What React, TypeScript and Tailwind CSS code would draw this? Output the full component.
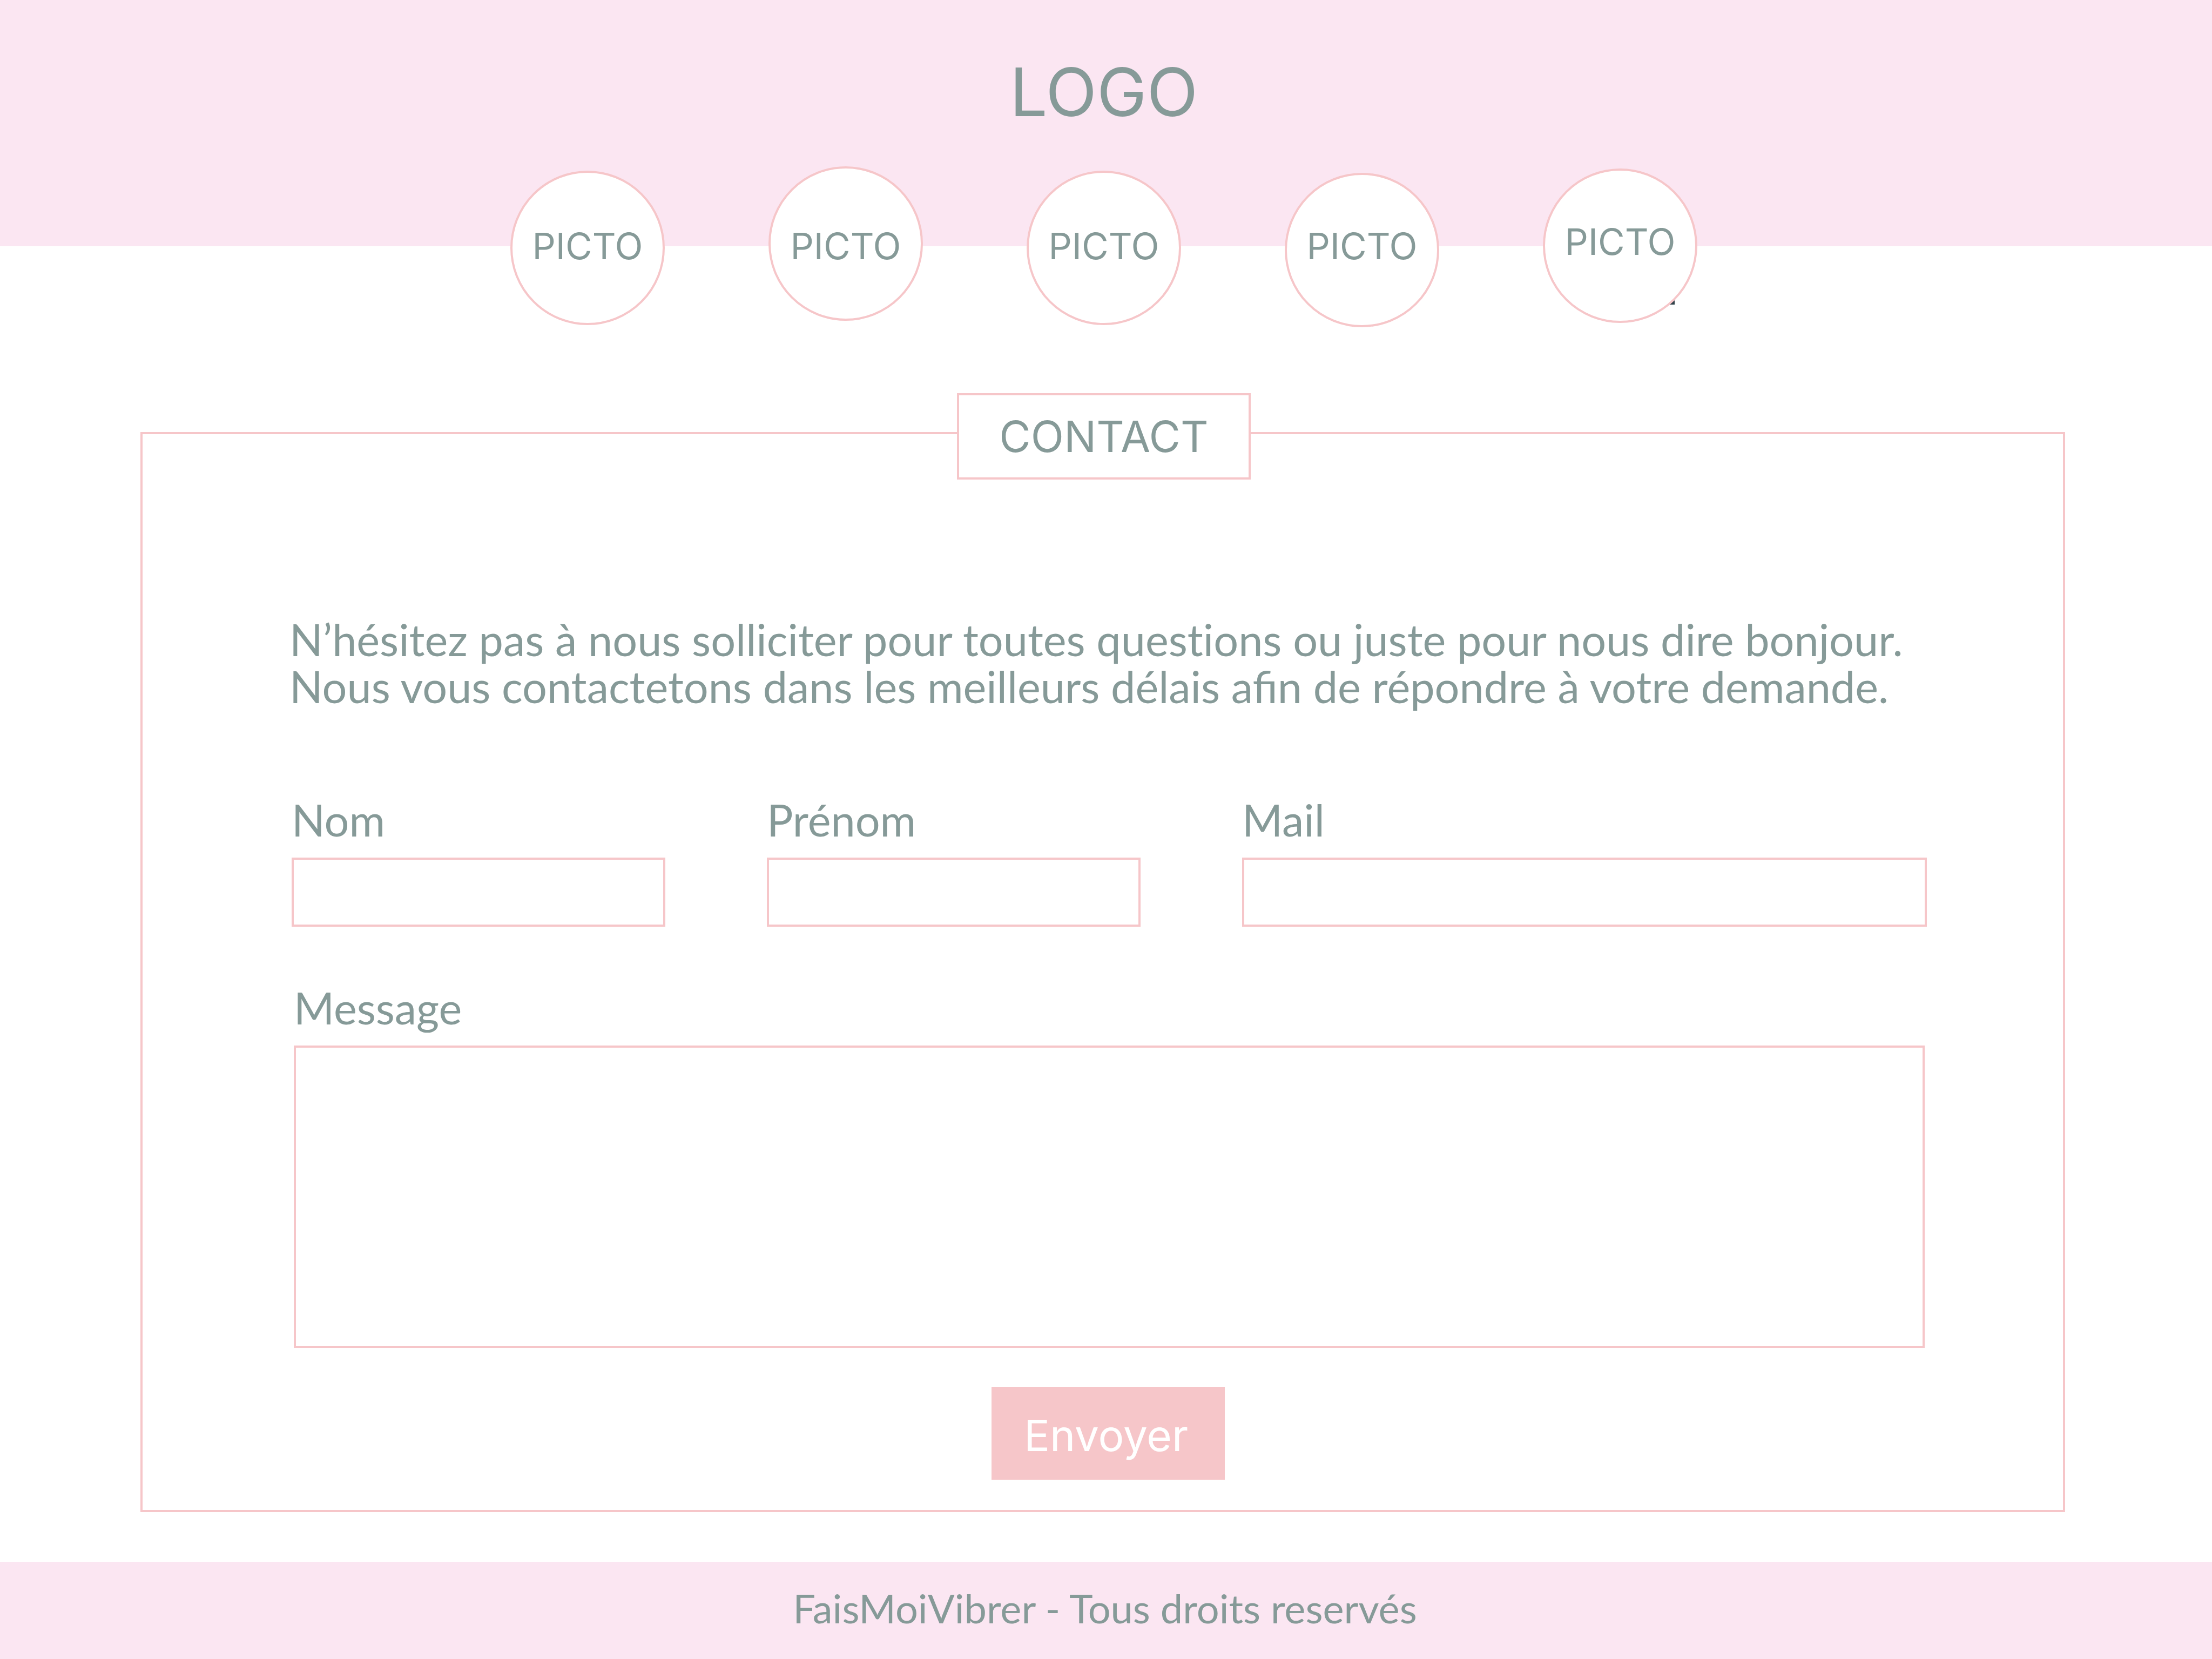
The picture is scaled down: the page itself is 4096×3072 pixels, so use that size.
type Picto = { id: number; drop: string; inner: string; mark?: boolean };

const pictos: Picto[] = [
  { id: 1, drop: "mt-2", inner: "pb-2" },
  { id: 2, drop: "mt-0", inner: "pt-2" },
  { id: 3, drop: "mt-2", inner: "pb-2" },
  { id: 4, drop: "mt-3", inner: "pb-4" },
  { id: 5, drop: "mt-1", inner: "pb-4", mark: true },
];

const fields = [
  { id: "nom", label: "Nom", type: "text" },
  { id: "prenom", label: "Prénom", type: "text" },
  { id: "mail", label: "Mail", type: "email" },
];

const labelClass = "text-[81px] leading-[96px]";
const boxClass = "w-full border-4 border-[#f6c6c9] bg-white px-8 text-[64px] outline-none";

function Header() {
  return (
    <header className="flex flex-col items-center bg-[#fbe6f2] pt-[106px] pr-2 font-[Inter,sans-serif]">
      <a href="#accueil" className="text-[124px] leading-[128px]">
        LOGO
      </a>
      <nav aria-label="Navigation principale" className="relative mt-[74px] -mb-[150px] flex items-start gap-48">
        {pictos.map((p) => (
          <div key={p.id} className={`relative ${p.drop}`}>
            {p.mark && <span className="absolute right-[42px] bottom-[34px] size-3 bg-[#31424a]" />}
            <a
              href={`#picto-${p.id}`}
              className={`relative flex size-[286px] items-center justify-center rounded-full border-4 border-[#f6c6c9] bg-white text-[68px] leading-[80px] ${p.inner}`}
            >
              PICTO
            </a>
          </div>
        ))}
      </nav>
    </header>
  );
}

function ContactForm() {
  return (
    <form className="mt-[156px] flex flex-col pl-1" onSubmit={(e) => e.preventDefault()}>
      <div className="grid grid-cols-[692fr_692fr_1268fr] gap-[188px]">
        {fields.map((f) => (
          <div key={f.id} className="flex flex-col gap-[22px]">
            <label htmlFor={f.id} className={labelClass}>
              {f.label}
            </label>
            <input id={f.id} name={f.id} type={f.type} className={`h-32 ${boxClass}`} />
          </div>
        ))}
      </div>
      <div className="mt-[102px] flex flex-col gap-[22px] px-1">
        <label htmlFor="message" className={labelClass}>
          Message
        </label>
        <textarea id="message" name="message" className={`block h-[560px] resize-none ${boxClass}`} />
      </div>
      <div className="mt-[72px] flex justify-center pr-1">
        <button
          type="submit"
          className="h-[172px] w-[432px] bg-[#f6c6c9] pt-2 pr-2 font-[Inter,sans-serif] text-[80px] leading-[96px] text-white"
        >
          Envoyer
        </button>
      </div>
    </form>
  );
}

export default function App() {
  return (
    <div className="flex min-h-screen flex-col bg-white font-[Lato,sans-serif] text-[#869a98]">
      <Header />
      <main className="flex-1 pt-[344px] pr-[272px] pb-[92px] pl-[260px]">
        <section className="flex flex-col border-4 border-[#f6c6c9] pr-[252px] pb-14 pl-[272px]">
          <h1 className="-mt-[76px] -ml-4 flex h-40 w-[544px] items-center justify-center self-center border-4 border-[#f6c6c9] bg-white font-[Inter,sans-serif] text-[80px] leading-[96px]">
            CONTACT
          </h1>
          <p className="mt-[252px] text-[81px] leading-[87px] first-line:[font-variant-ligatures:none]">
            N’hésitez pas à nous solliciter pour toutes questions ou juste pour nous dire bonjour.
            <br />
            Nous vous contactetons dans les meilleurs délais afin de répondre à votre demande.
          </p>
          <ContactForm />
        </section>
      </main>
      <footer className="flex h-[180px] items-center justify-center bg-[#fbe6f2] pr-1 pb-2 text-[74px] leading-[88px]">
        FaisMoiVibrer - Tous droits reservés
      </footer>
    </div>
  );
}
